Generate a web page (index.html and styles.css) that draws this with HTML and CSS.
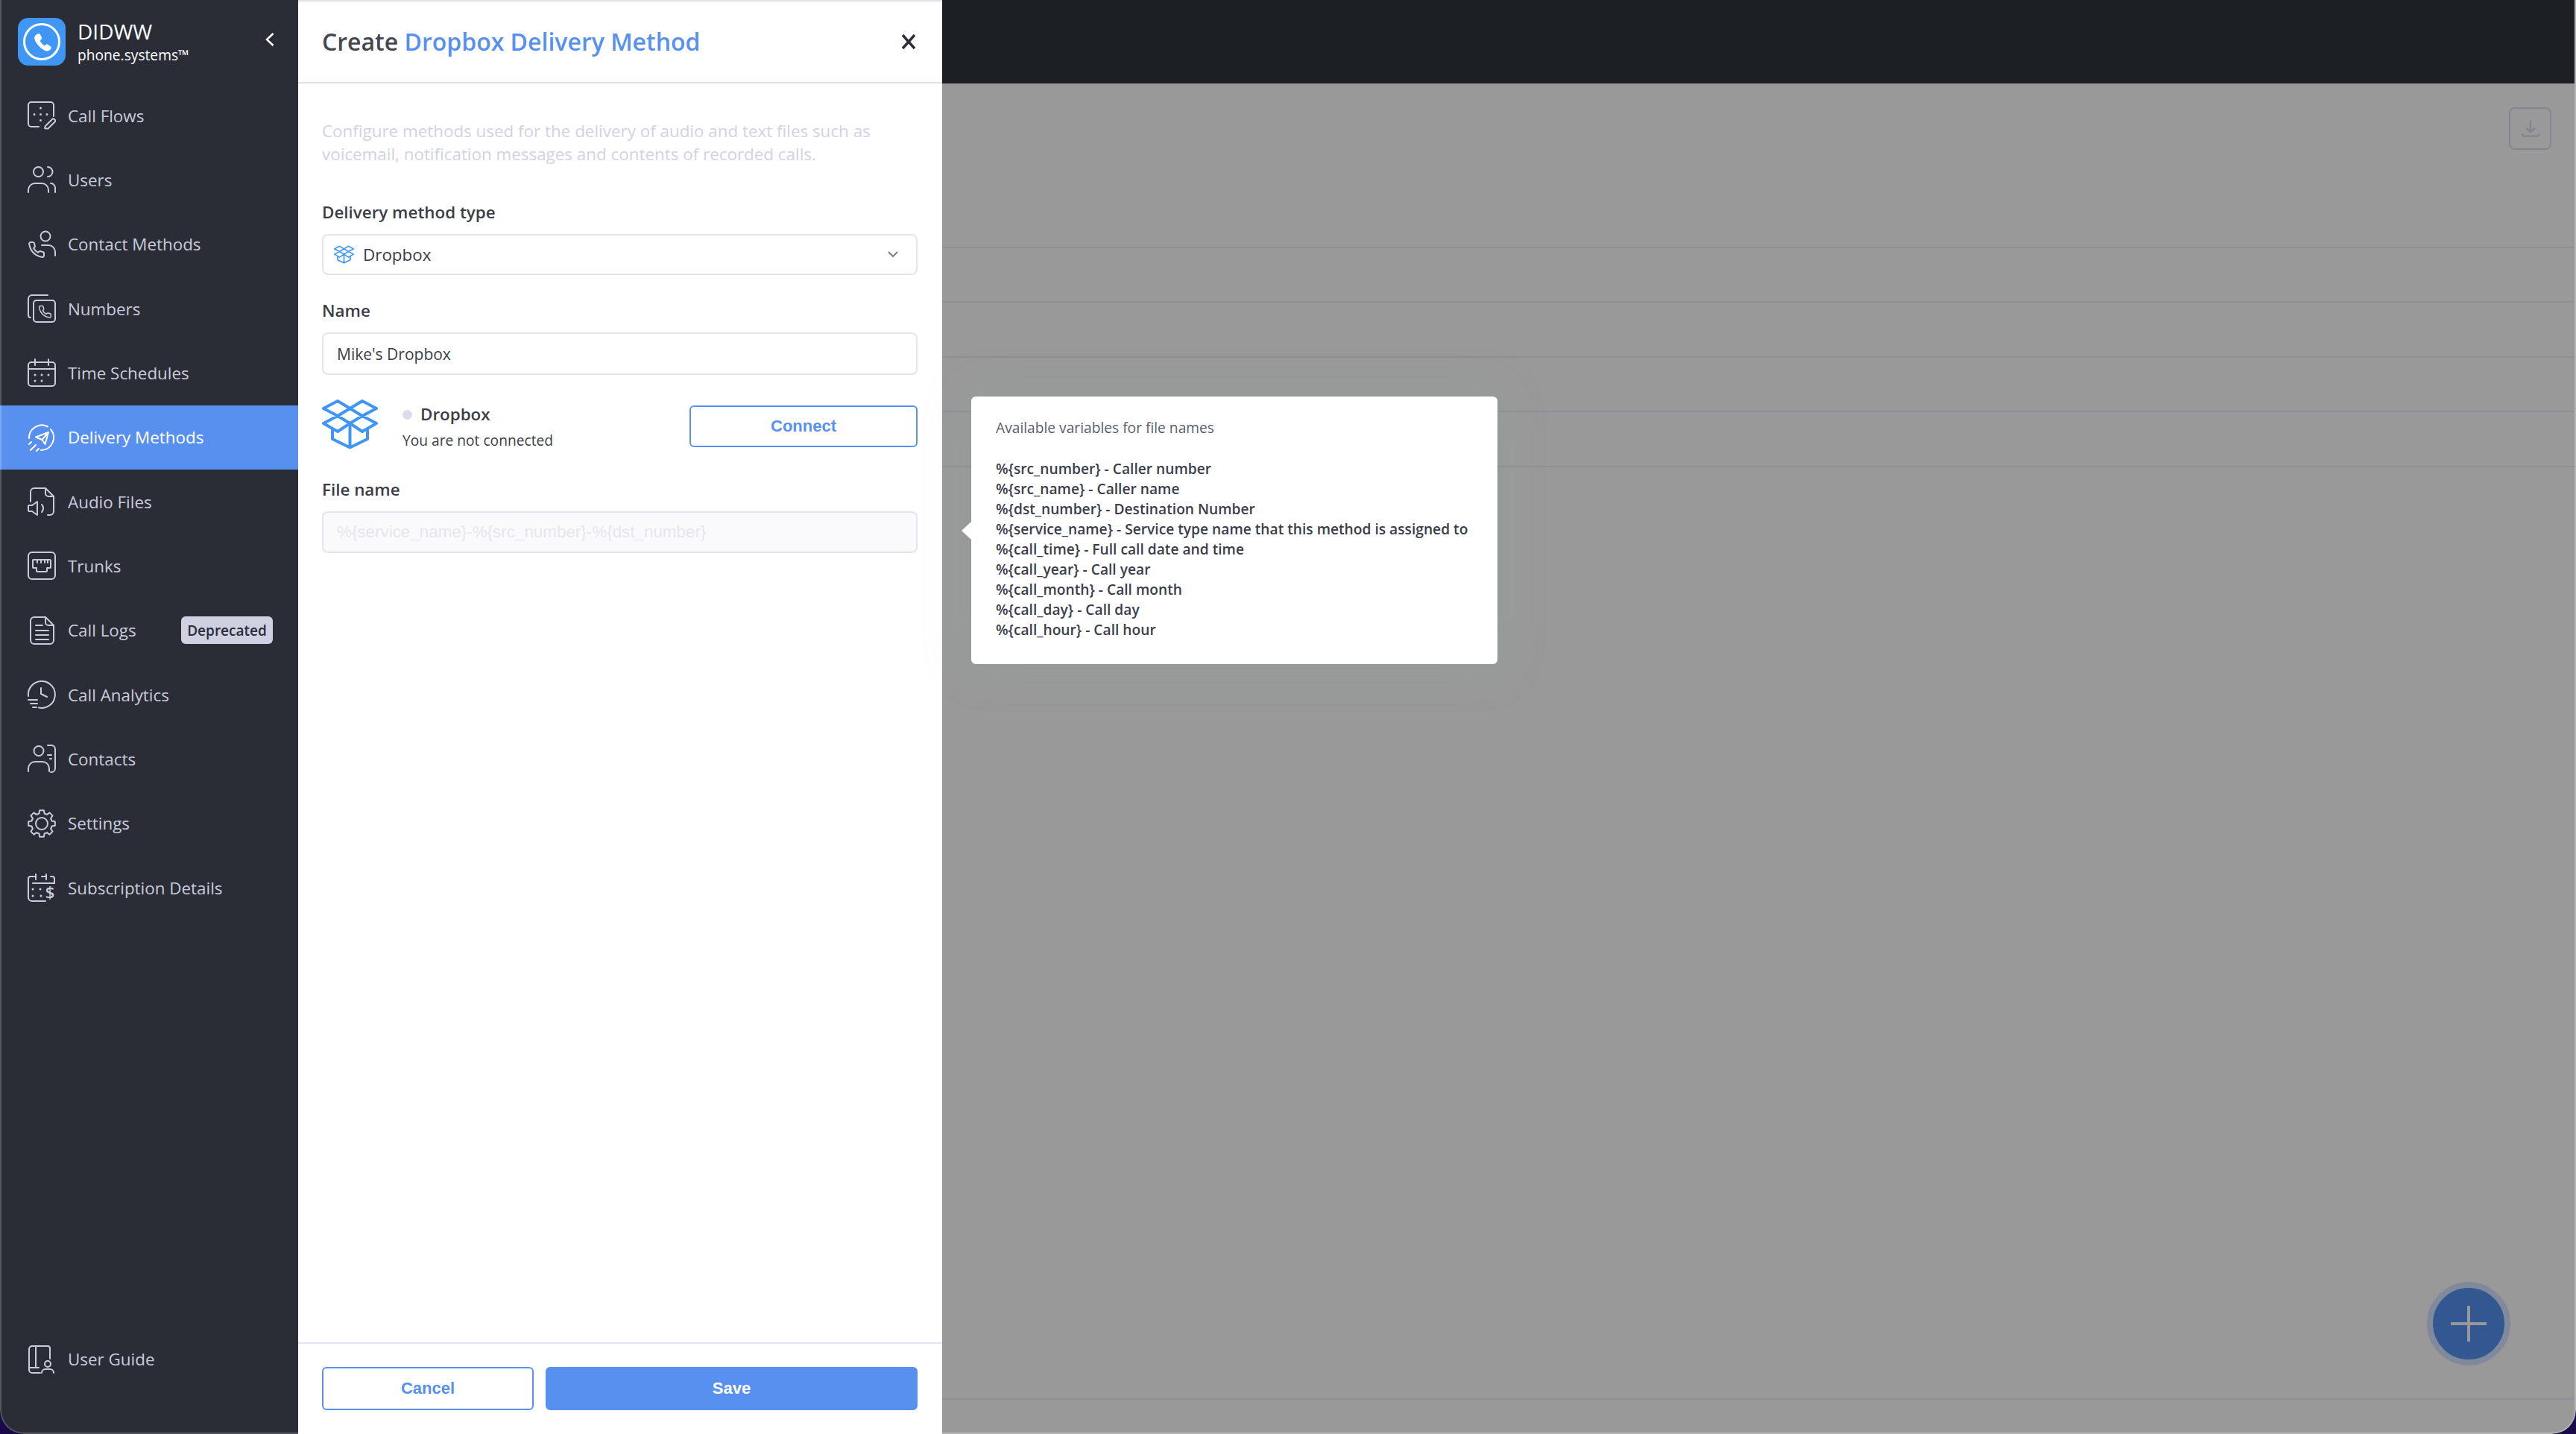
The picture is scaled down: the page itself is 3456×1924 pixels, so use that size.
FILE: index.html
```html
<!DOCTYPE html>
<html lang="en">
<head>
<meta charset="utf-8">
<title>Create Dropbox Delivery Method</title>
<link rel="stylesheet" href="styles.css">
</head>
<body>
<div class="shell">
  <aside class="sidebar">
    <div class="brand">
      <svg class="logo" viewBox="0 0 64 64"><rect width="64" height="64" rx="14" fill="#4096f5"/><circle cx="32" cy="32" r="23.5" fill="none" stroke="#fff" stroke-width="3"/><path transform="translate(20 20) scale(1)" fill="#fff" d="M6 1.5c1.5-1 3-.8 3.8.6l2 3.6c.7 1.2.4 2.5-.6 3.3l-1.6 1.3c.9 2.6 3.5 5.6 6.2 6.9l1.6-1.3c1-.8 2.3-.8 3.3 0l3.2 2.6c1.2 1 1.2 2.6.1 3.6l-1.3 1.2c-1.6 1.4-3.6 1.6-5.6.9C10.800 21.700 4.200 14.800 2.400 8.800 1.800 6.800 2.400 4.500 4 3.100z"/></svg>
      <div class="brand-text">
        <div class="brand-name">DIDWW</div>
        <div class="brand-sub">phone.systems™</div>
      </div>
      <svg class="collapse" viewBox="0 0 14 20"><path d="M11.500 2L3 10l8.500 8" fill="none" stroke="#fff" stroke-width="2.500"/></svg>
    </div>
    <nav class="nav">
      <a class="nav-item"><svg class="nav-icon" viewBox="0 0 38 38"><path d="M15 34H5a4 4 0 0 1-4-4V5a4 4 0 0 1 4-4h26a4 4 0 0 1 4 4v15"/><path d="M24 33l9-9a2 2 0 0 1 3 0l.5.500a2 2 0 0 1 0 3l-9 9h-3.500a1 1 0 0 1-1-1z"/><path class="dots" d="M17.500 9v.01M9 17.500v.01M17.500 17.500v.01M26 17.500v.01M17.500 25.500v.01"/></svg><span>Call Flows</span></a>
      <a class="nav-item"><svg class="nav-icon" viewBox="0 0 38 38"><circle cx="14.500" cy="8.500" r="6.500"/><path d="M27 2a6.500 6.500 0 0 1 0 13"/><path d="M1 36v-3a9 9 0 0 1 9-9h9a9 9 0 0 1 9 9v3"/><path d="M31 24a6 6 0 0 1 6 6v6"/></svg><span>Users</span></a>
      <a class="nav-item"><svg class="nav-icon" viewBox="0 0 38 38"><circle cx="24" cy="8" r="6.500"/><path d="M19 20h9a9 9 0 0 1 9 9v5"/><path transform="translate(0 14) scale(1)" d="M22 16.920v3a2 2 0 0 1-2.180 2 19.790 19.790 0 0 1-8.630-3.070 19.500 19.500 0 0 1-6-6 19.790 19.790 0 0 1-3.070-8.670A2 2 0 0 1 4.110 2h3a2 2 0 0 1 2 1.720c.1 1 .3 1.900.7 2.810a2 2 0 0 1-.45 2.110L8.090 9.910a16 16 0 0 0 6 6l1.270-1.270a2 2 0 0 1 2.110-.45c.9.400 1.800.600 2.810.7A2 2 0 0 1 22 16.920z"/></svg><span>Contact Methods</span></a>
      <a class="nav-item"><svg class="nav-icon" viewBox="0 0 38 38"><path d="M27 1H6a5 5 0 0 0-5 5v22a3 3 0 0 0 3 3"/><rect x="8" y="8" width="29" height="29" rx="4"/><path transform="translate(14 14) scale(.78)" d="M22 16.920v3a2 2 0 0 1-2.180 2 19.790 19.790 0 0 1-8.630-3.070 19.500 19.500 0 0 1-6-6 19.790 19.790 0 0 1-3.070-8.670A2 2 0 0 1 4.110 2h3a2 2 0 0 1 2 1.720c.1 1 .3 1.900.7 2.810a2 2 0 0 1-.45 2.110L8.090 9.910a16 16 0 0 0 6 6l1.270-1.270a2 2 0 0 1 2.110-.45c.9.400 1.800.600 2.810.7A2 2 0 0 1 22 16.920z"/></svg><span>Numbers</span></a>
      <a class="nav-item"><svg class="nav-icon" viewBox="0 0 38 38"><rect x="1" y="5" width="36" height="32" rx="4"/><path d="M1 14h36M10 1v8M28 1v8"/><path class="dots" d="M10 22v.01M19 22v.01M28 22v.01M10 30v.01M19 30v.01"/></svg><span>Time Schedules</span></a>
      <a class="nav-item active"><svg class="nav-icon" viewBox="0 0 38 38"><path d="M2 20A17 17 0 0 1 27 4.500"/><path d="M31 8a17 17 0 0 1-13 28"/><path d="M11 18.500L28 12l-4.500 16-4-6-8.500-3.500zM19.500 22L28 12"/><path d="M2 28l3-3M4 36l7-7M12 37l3-3"/></svg><span>Delivery Methods</span></a>
      <a class="nav-item"><svg class="nav-icon" viewBox="0 0 38 38"><path d="M4 19V6a5 5 0 0 1 5-5h15l11 11v20a5 5 0 0 1-5 5h-3"/><path d="M24 1v7a4 4 0 0 0 4 4h7"/><path d="M1 25a1 1 0 0 1 1-1h4l7-5v18l-7-5H2a1 1 0 0 1-1-1z"/><path d="M19 23a7 7 0 0 1 0 10"/></svg><span>Audio Files</span></a>
      <a class="nav-item"><svg class="nav-icon" viewBox="0 0 38 38"><rect x="1" y="1" width="36" height="36" rx="5"/><path d="M8 11h22a1 1 0 0 1 1 1v9a1 1 0 0 1-1 1h-4v4a1 1 0 0 1-1 1H13a1 1 0 0 1-1-1v-4H8a1 1 0 0 1-1-1v-9a1 1 0 0 1 1-1z"/><path d="M13 11v4M18 11v4M23 11v4M27 11v4"/></svg><span>Trunks</span></a>
      <a class="nav-item"><svg class="nav-icon" viewBox="0 0 38 38"><path d="M24 1H9a5 5 0 0 0-5 5v26a5 5 0 0 0 5 5h21a5 5 0 0 0 5-5V12z"/><path d="M24 1v7a4 4 0 0 0 4 4h7"/><path d="M11 12h9M11 19h17M11 25h17M11 31h17"/></svg><span>Call Logs</span><span class="badge">Deprecated</span></a>
      <a class="nav-item"><svg class="nav-icon" viewBox="0 0 38 38"><path d="M1 21A18 18 0 1 1 15 36.500"/><path d="M19 10v8l8 4" transform="translate(-1 0)"/><path d="M1 26h12M4 31h9M7 36h5"/></svg><span>Call Analytics</span></a>
      <a class="nav-item"><svg class="nav-icon" viewBox="0 0 38 38"><circle cx="15" cy="8.500" r="6.500"/><path d="M1 36v-4a9 9 0 0 1 9-9h10a9 9 0 0 1 9 9v4"/><path d="M27 1h5a5 5 0 0 1 5 5v26a5 5 0 0 1-5 5h-1"/><path d="M27 14h5M30 19h2"/></svg><span>Contacts</span></a>
      <a class="nav-item"><svg class="nav-icon" viewBox="0 0 38 38"><polygon points="15.400,5.500 16.200,1.200 21.800,1.200 22.600,5.500 26,6.900 29.600,4.400 33.600,8.400 31.100,12 32.500,15.400 36.800,16.200 36.800,21.800 32.500,22.600 31.100,26 33.600,29.600 29.600,33.600 26,31.100 22.600,32.500 21.800,36.800 16.200,36.800 15.400,32.500 12,31.100 8.400,33.600 4.400,29.600 6.900,26 5.500,22.600 1.200,21.800 1.200,16.200 5.500,15.400 6.900,12 4.400,8.400 8.400,4.400 12,6.900"/><circle cx="19" cy="19" r="8"/></svg><span>Settings</span></a>
      <a class="nav-item"><svg class="nav-icon" viewBox="0 0 38 38"><path d="M24 37H6a5 5 0 0 1-5-5V7a3 3 0 0 1 3-3h7M19 4h6M31 4h2a3 3 0 0 1 3 3v6"/><path d="M11 1v7M25 1v7M7 13h29"/><path class="dots" d="M7 21v.01M17 21v.01M7 30v.01M18 30v.01"/><text class="dollar" x="30" y="33">$</text></svg><span>Subscription Details</span></a>
    </nav>
    <a class="nav-item guide"><svg class="nav-icon" viewBox="0 0 38 38"><path d="M17 37H6a4 4 0 0 1-4-4V5a4 4 0 0 1 4-4h21a3 3 0 0 1 3 3v14"/><path d="M11 1v28M2 30h13"/><circle cx="27" cy="25" r="4"/><path d="M19 37a5 5 0 0 1 5-5h6a5 5 0 0 1 5 5"/></svg><span>User Guide</span></a>
  </aside>

  <section class="panel">
    <header class="panel-head">
      <h1 class="panel-title">Create <span class="accent">Dropbox Delivery Method</span></h1>
      <svg class="close" viewBox="0 0 20 20"><path d="M2 1l16 18M18 1L2 19" fill="none" stroke="#2a2d36" stroke-width="3.500"/></svg>
    </header>
    <div class="panel-body">
      <p class="intro">Configure methods used for the delivery of audio and text files such as voicemail, notification messages and contents of recorded calls.</p>
      <div class="field first">
        <div class="label">Delivery method type</div>
        <div class="control select">
          <svg class="select-icon" viewBox="0 0 75 66"><g fill="none" stroke="#4096f5" stroke-width="4.500" stroke-linejoin="round"><path d="M21 2l16.500 10L21 22 2 12zM54 2l19 10-19 10-16.500-10zM21 22l16.500 10L21 43 2 32zM54 22l19 10-19 11-16.500-11z"/><path d="M14 38v15l23.500 11.500L61 53V38M37.500 32v32"/></g></svg>
          <span>Dropbox</span>
          <svg class="chevron" viewBox="0 0 14 9"><path d="M1 1l6 6 6-6" fill="none" stroke="#7c7e92" stroke-width="2"/></svg>
        </div>
      </div>
      <div class="field">
        <div class="label">Name</div>
        <div class="control text-input">Mike's Dropbox</div>
      </div>
      <div class="connect-row">
        <svg class="dropbox-art" viewBox="0 0 75 66"><g fill="none" stroke="#4096f5" stroke-width="4" stroke-linejoin="round"><path d="M21 2l16.500 10L21 22 2 12zM54 2l19 10-19 10-16.500-10zM21 22l16.500 10L21 43 2 32zM54 22l19 10-19 11-16.500-11z"/><path d="M14 38v15l23.500 11.500L61 53V38M37.500 32v32"/></g></svg>
        <div class="connect-text">
          <div class="connect-name"><i class="dot"></i>Dropbox</div>
          <div class="connect-status">You are not connected</div>
        </div>
        <button class="btn btn-outline connect-btn">Connect</button>
      </div>
      <div class="field file-field">
        <div class="label">File name</div>
        <div class="control text-input placeholder">%{service_name}-%{src_number}-%{dst_number}</div>
      </div>
    </div>
    <footer class="panel-foot">
      <button class="btn btn-outline cancel-btn">Cancel</button>
      <button class="btn btn-solid save-btn">Save</button>
    </footer>
  </section>

  <main class="main">
    <div class="topbar"></div>
    <div class="toolbar">
      <div class="export"><svg viewBox="0 0 28 28" class="export-icon"><path d="M14 3v15M8 12.500l6 6 6-6M3 20v1.500a2 2 0 0 0 2 2h18a2 2 0 0 0 2-2V20" fill="none" stroke="#85858f" stroke-width="2.500"/></svg></div>
    </div>
    <div class="row"></div>
    <div class="row"></div>
    <div class="row"></div>
    <div class="row"></div>
    <div class="row"></div>
    <div class="filler"></div>
    <div class="foot"></div>
    <div class="fab"><svg viewBox="0 0 48 48" class="fab-icon"><path d="M0 24h48M24 0v48" stroke="#999" stroke-width="4"/></svg></div>
  </main>

  <div class="tooltip">
    <div class="tip-title">Available variables for file names</div>
    <div class="tip-line">%{src_number} - Caller number</div>
    <div class="tip-line">%{src_name} - Caller name</div>
    <div class="tip-line">%{dst_number} - Destination Number</div>
    <div class="tip-line">%{service_name} - Service type name that this method is assigned to</div>
    <div class="tip-line">%{call_time} - Full call date and time</div>
    <div class="tip-line">%{call_year} - Call year</div>
    <div class="tip-line">%{call_month} - Call month</div>
    <div class="tip-line">%{call_day} - Call day</div>
    <div class="tip-line">%{call_hour} - Call hour</div>
  </div>
</div>
</body>
</html>
```
FILE: styles.css
```css
* { box-sizing: border-box; }
html, body { margin: 0; height: 100%; overflow: hidden; background: #1a0a4a; }
body { font-family: "Open Sans", "Noto Sans", sans-serif; }
.shell { position: relative; display: flex; width: 3456px; height: 1924px; border-radius: 0 0 32px 32px; overflow: hidden; }

/* Sidebar */
.sidebar { width: 400px; flex: none; display: flex; flex-direction: column; background: #2a2d36; border-left: 2px solid #54575f; border-bottom: 2px solid #54575f; border-bottom-left-radius: 32px; }
.brand { height: 112px; flex: none; display: flex; align-items: center; padding: 0 31px 0 22px; }
.logo { width: 64px; height: 64px; flex: none; }
.brand-text { margin-left: 16px; color: #fff; padding-top: 3px; }
.brand-name { font-size: 28px; line-height: 36px; margin-top: -3px; }
.brand-sub { font-size: 19.2px; line-height: 28px; }
.collapse { width: 14px; height: 20px; margin-left: auto; margin-top: -6px; }
.nav { flex: 1; display: flex; flex-direction: column; }
.nav-item { height: 86.33px; flex: none; display: flex; align-items: center; padding-left: 35px; font-size: 22.4px; color: #c9cbdc; }
.nav-item.active { background: #5890ef; color: #fff; box-shadow: -2px 0 0 #7da9f2; }
.nav-icon { width: 38px; height: 38px; flex: none; margin-right: 16px; fill: none; stroke: #c9cbdc; stroke-width: 2; stroke-linecap: round; stroke-linejoin: round; }
.active .nav-icon { stroke: #fff; }
.dots { stroke-width: 3; }
.dollar { font-family: "Open Sans", sans-serif; font-size: 22px; font-weight: 600; fill: #c9cbdc; stroke: none; text-anchor: middle; }
.badge { margin-left: auto; margin-right: 34px; height: 37px; width: 123px; display: flex; align-items: center; justify-content: center; background: #cfd1e2; color: #2a2d36; font-size: 19px; font-weight: 600; border-radius: 6px; }
.guide { margin-bottom: 55px; }

/* Panel */
.panel { width: 864px; flex: none; display: flex; flex-direction: column; background: #fff; }
.panel-head { height: 112px; flex: none; display: flex; align-items: center; justify-content: space-between; padding: 0 35px 0 32px; border-top: 2px solid #e2e2ee; border-bottom: 2px solid #e2e2ee; }
.panel-title { margin: 0; font-size: 32px; line-height: 42px; font-weight: 600; color: #45474f; }
.accent { color: #5890ef; }
.close { width: 20px; height: 20px; }
.panel-body { flex: 1; padding: 48px 33px 0 32px; }
.intro { margin: 0; font-size: 22.4px; line-height: 31px; color: #d2d2e4; }
.field { margin-top: 34px; }
.field.first { margin-top: 49px; }
.field.file-field { margin-top: 41px; }
.label { font-size: 22.4px; line-height: 28px; font-weight: 600; color: #3a3d46; margin-bottom: 15px; }
.control { display: flex; align-items: center; border: 2px solid #e4e4ef; border-radius: 8px; font-size: 21px; color: #3a3d46; }
.select { height: 55px; padding: 0 24px 0 14px; font-size: 22.4px; }
.select-icon { width: 27px; height: 27px; margin-right: 12px; }
.chevron { width: 14px; height: 9px; margin-left: auto; }
.text-input { height: 57px; padding-left: 18px; }
.placeholder { height: 56px; background: #fafafc; color: #e6e6ee; font-family: "Liberation Sans", sans-serif; font-size: 22.4px; }
.connect-row { display: flex; align-items: center; margin-top: 33px; height: 66px; }
.dropbox-art { width: 75px; height: 66px; flex: none; }
.connect-text { margin-left: 33px; margin-top: 7px; }
.connect-name { display: flex; align-items: center; font-size: 22.4px; line-height: 30px; font-weight: 600; color: #3a3d46; }
.dot { width: 13px; height: 13px; border-radius: 50%; background: #dcdcea; margin-right: 11px; }
.connect-status { font-size: 19.2px; line-height: 26px; margin-top: 7px; color: #3a3d46; }
.btn { display: flex; align-items: center; justify-content: center; font-family: "Liberation Sans", sans-serif; font-size: 22px; font-weight: 700; border-radius: 6px; padding: 0; }
.btn-outline { background: #fff; color: #5890ef; border: 2px solid #5890ef; }
.btn-solid { background: #5890ef; color: #fff; border: 2px solid #5890ef; }
.connect-btn { width: 306px; height: 56px; margin-left: auto; margin-top: 6px; }
.panel-foot { height: 123px; flex: none; display: flex; gap: 16px; padding: 31px 33px 0 32px; border-top: 2px solid #e2e2ee; }
.cancel-btn { width: 284px; height: 58px; }
.save-btn { flex: 1; height: 58px; }

/* Dimmed page behind */
.main { position: relative; flex: 1; display: flex; flex-direction: column; background: #999; border-right: 2px solid #b4b4b4; border-bottom: 2px solid #b4b4b4; border-bottom-right-radius: 32px; }
.topbar { height: 112px; flex: none; background: #1c1f24; }
.toolbar { height: 218.500px; flex: none; display: flex; justify-content: flex-end; align-items: flex-start; padding: 32px 31px 0 0; }
.export { width: 57px; height: 57px; display: flex; align-items: center; justify-content: center; border: 2px solid #85858f; border-radius: 8px; }
.export-icon { width: 28px; height: 28px; }
.row { height: 73.500px; flex: none; border-top: 2px solid #8e8e94; }
.filler { flex: 1; }
.foot { height: 46px; flex: none; border-top: 2px solid #8e8e96; }
.fab { position: absolute; left: 1992px; top: 1720px; width: 112px; height: 112px; display: flex; align-items: center; justify-content: center; border-radius: 50%; background: #325791; border: 8px solid #808a9c; }
.fab-icon { width: 48px; height: 48px; }

/* Tooltip */
.tooltip { position: absolute; left: 1303px; top: 532px; width: 706px; height: 359px; padding: 28px 33px 0; background: #fff; border-radius: 6px; box-shadow: 0 0 60px rgba(150,160,160,.35); }
.tooltip::before { content: ""; position: absolute; left: -13px; top: 168px; border-right: 13px solid #fff; border-top: 12px solid transparent; border-bottom: 12px solid transparent; }
.tip-title { font-size: 19.2px; line-height: 27px; color: #5a5d6e; margin-bottom: 28px; }
.tip-line { font-size: 19.2px; line-height: 27px; font-weight: 600; color: #3a3d4a; }
```
